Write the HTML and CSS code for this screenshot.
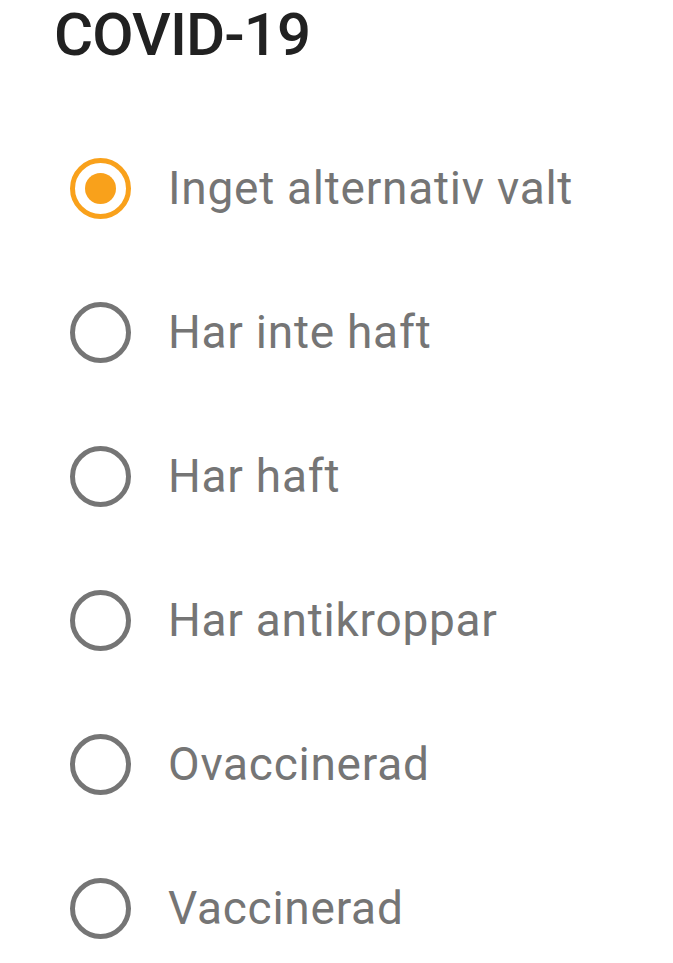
FILE: index.html
```html
<!DOCTYPE html>
<html lang="sv">
<head>
<meta charset="utf-8">
<link rel="stylesheet" href="styles.css">
</head>
<body>
<h1 class="title">COVID-19</h1>
<ul class="options">
  <li class="option"><span class="radio checked"><span class="dot"></span></span><span class="label">Inget alternativ valt</span></li>
  <li class="option"><span class="radio"></span><span class="label">Har inte haft</span></li>
  <li class="option"><span class="radio"></span><span class="label">Har haft</span></li>
  <li class="option"><span class="radio"></span><span class="label">Har antikroppar</span></li>
  <li class="option"><span class="radio"></span><span class="label">Ovaccinerad</span></li>
  <li class="option"><span class="radio"></span><span class="label">Vaccinerad</span></li>
</ul>
</body>
</html>
```
FILE: styles.css
```css
html, body {
  margin: 0;
  padding: 0;
  background: #ffffff;
  font-family: Roboto, "Noto Sans", sans-serif;
}
.title {
  margin: 0;
  padding: 0 0 0 54px;
  font-size: 60px;
  font-weight: 500;
  line-height: 70px;
  letter-spacing: -0.9px;
  color: #212121;
}
.options {
  list-style: none;
  margin: 0;
  padding: 46px 0 0 0;
}
.option {
  height: 144px;
  display: flex;
  align-items: center;
  padding-left: 70px;
}
.radio {
  box-sizing: border-box;
  width: 61px;
  height: 61px;
  border: 5px solid #757575;
  border-radius: 50%;
  display: flex;
  align-items: center;
  justify-content: center;
  flex: none;
}
.radio.checked {
  border-color: #f9a11b;
}
.dot {
  width: 31px;
  height: 31px;
  border-radius: 50%;
  background: #f9a11b;
}
.label {
  margin-left: 37px;
  font-size: 46px;
  letter-spacing: 0.75px;
  color: #757575;
}
```
